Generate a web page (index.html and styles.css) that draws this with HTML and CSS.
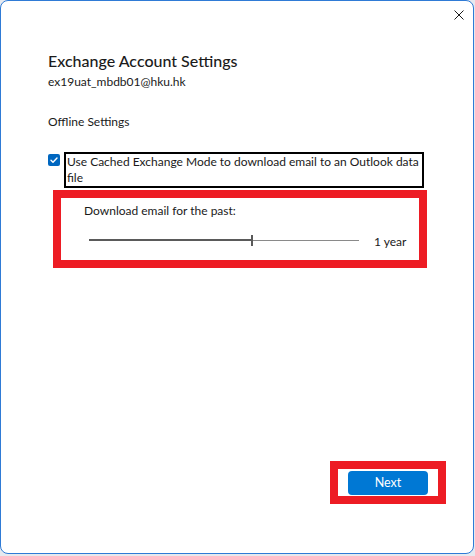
FILE: index.html
```html
<!DOCTYPE html>
<html>
<head>
<meta charset="utf-8">
<link rel="stylesheet" href="styles.css">
</head>
<body>
<div class="window">
  <div class="titlebar">
    <svg class="close" width="10" height="10" viewBox="0 0 10 10"><path d="M0.5 0.5 L9.5 9.5 M9.5 0.5 L0.5 9.5" stroke="#1a1a1a" stroke-width="1" fill="none"/></svg>
  </div>
  <div class="content">
    <h1 class="title">Exchange Account Settings</h1>
    <div class="email">ex19uat_mbdb01@hku.hk</div>
    <div class="section">Offline Settings</div>
    <div class="check-row">
      <span class="checkbox"><svg width="12" height="12" viewBox="0 0 12 12"><path d="M3 6.2 L5 8.2 L9 4" stroke="#fff" stroke-width="1.4" fill="none" stroke-linecap="round" stroke-linejoin="round"/></svg></span>
      <span class="check-label">Use Cached Exchange Mode to download email to an Outlook data file</span>
    </div>
    <div class="redbox slider-box">
      <div class="slider-label">Download email for the past:</div>
      <div class="slider-row">
        <div class="track">
          <div class="track-fill"></div>
          <div class="thumb"></div>
          <div class="track-rest"></div>
        </div>
        <span class="slider-value">1 year</span>
      </div>
    </div>
  </div>
  <div class="footer">
    <div class="redbox next-box">
      <button class="next">Next</button>
    </div>
  </div>
</div>
</body>
</html>
```

FILE: styles.css
```css
html, body {
  margin: 0;
  padding: 0;
}
body {
  width: 475px;
  height: 556px;
  background: #e6e9ef;
  font-family: Lato, "Noto Sans", sans-serif;
  color: #1a1a1a;
  overflow: hidden;
}
.window {
  box-sizing: border-box;
  width: 474px;
  height: 554px;
  background: #ffffff;
  border: 1px solid #2f7bd6;
  border-radius: 8px;
  display: flex;
  flex-direction: column;
}
.titlebar {
  display: flex;
  justify-content: flex-end;
  padding: 9px 9px 0 0;
  height: 20px;
}
.close {
  display: block;
}
.content {
  padding-left: 47px;
  flex: 1;
}
.title {
  margin: 20px 0 0 0;
  font-size: 16px;
  font-weight: 500;
  line-height: 22px;
  color: #1b1b1b;
}
.email {
  margin-top: 2px;
  font-size: 12px;
  line-height: 16px;
}
.section {
  margin-top: 24px;
  font-size: 12px;
  line-height: 16px;
}
.check-row {
  display: flex;
  align-items: flex-start;
  margin-top: 22px;
}
.checkbox {
  box-sizing: border-box;
  width: 12px;
  height: 12px;
  margin-top: 2px;
  border-radius: 2px;
  background: #0067c0;
  display: flex;
}
.check-label {
  box-sizing: border-box;
  width: 360px;
  margin-left: 4px;
  border: 2px solid #000;
  padding: 0 2px 0 1px;
  font-size: 12px;
  line-height: 16px;
}
.redbox {
  box-sizing: border-box;
  border: 8px solid #ed1c24;
  background: #fff;
}
.slider-box {
  width: 374px;
  height: 78px;
  margin: 2px 0 0 5px;
  padding: 5px 0 0 23px;
}
.slider-label {
  font-size: 12px;
  line-height: 16px;
}
.slider-row {
  display: flex;
  align-items: center;
  margin-top: 11px;
}
.track {
  display: flex;
  align-items: center;
  width: 270px;
  margin-left: 5px;
  height: 12px;
}
.track-fill {
  width: 162px;
  height: 2px;
  background: #5a5a5a;
}
.thumb {
  width: 2px;
  height: 11px;
  background: #5a5a5a;
}
.track-rest {
  flex: 1;
  height: 1px;
  background: #8a8a8a;
}
.slider-value {
  margin-left: 15px;
  font-size: 12px;
  line-height: 16px;
  margin-top: 4px;
}
.footer {
  display: flex;
  justify-content: flex-end;
  padding: 0 27px 49px 0;
}
.next-box {
  width: 116px;
  height: 43px;
  padding: 2px 10px 0 10px;
}
.next {
  box-sizing: border-box;
  width: 80px;
  height: 24px;
  border: none;
  border-radius: 4px;
  background: #0078d4;
  color: #ffffff;
  font-family: Lato, "Noto Sans", sans-serif;
  font-size: 12.5px;
  line-height: 16px;
  padding: 0;
}
```
